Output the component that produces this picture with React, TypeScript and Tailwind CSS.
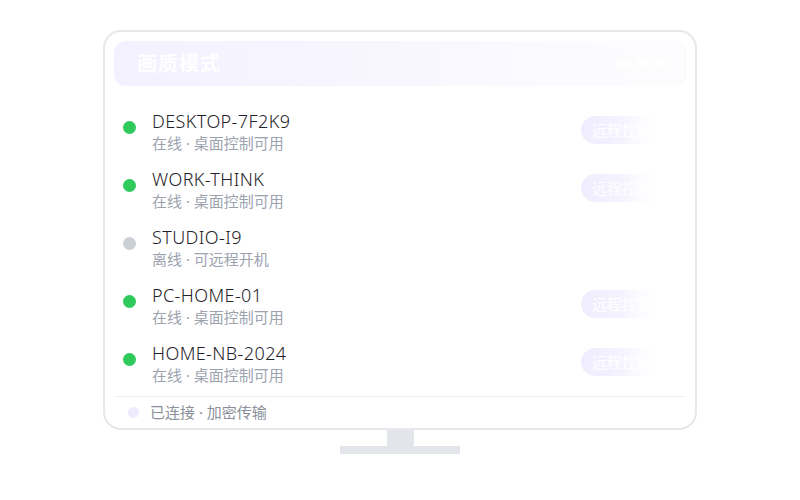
import React from 'react';

interface Device {
  name: string;
  online: boolean;
}

const devices: Device[] = [
  { name: 'DESKTOP-7F2K9', online: true },
  { name: 'WORK-THINK', online: true },
  { name: 'STUDIO-I9', online: false },
  { name: 'PC-HOME-01', online: true },
  { name: 'HOME-NB-2024', online: true },
];

const font = { fontFamily: '"Noto Sans", "Noto Sans CJK SC", sans-serif' };

const DeviceRow: React.FC<{ device: Device }> = ({ device }) => (
  <div className="flex items-center h-[58px] pl-[18px] pr-[32px]">
    <span
      className={`w-[13px] h-[13px] rounded-full mb-[7px] shrink-0 ${device.online ? 'bg-[#2fc95c]' : 'bg-[#cbd0d6]'}`}
    />
    <div className="ml-[16px] flex flex-col">
      <span className="text-[18px] leading-[22px] font-light text-[#1f2329] tracking-[0.4px]">{device.name}</span>
      <span className="text-[15px] leading-[20px] text-[#9ca3af] mt-[1px]">
        {device.online ? '在线 · 桌面控制可用' : '离线 · 可远程开机'}
      </span>
    </div>
    {device.online && (
      <button className="ml-auto mb-[2px] h-[28px] px-[11px] rounded-full text-[15px] text-white bg-gradient-to-r from-[#efecfe] via-[#f5f3ff] to-white [mask-image:linear-gradient(to_right,black_55%,transparent_100%)]">
        远程控制
      </button>
    )}
  </div>
);

export default function App() {
  return (
    <div className="w-[800px] h-[500px] bg-white flex flex-col items-center pt-[30px]" style={font}>
      <div className="w-[594px] h-[400px] border-2 border-[#e6e8eb] rounded-[18px] bg-white flex flex-col overflow-hidden">
        <div className="mx-[9px] mt-[9px] h-[45px] rounded-[12px] bg-gradient-to-r from-[#f3f1ff] via-[#f8f7ff] to-[#fdfdff] flex items-center pl-[23px] pr-[14px] border-r border-[#f5f5f8]">
          <span className="text-[20px] font-bold text-white tracking-[1px]">画质模式</span>
          <div className="ml-auto flex gap-[3px] mr-[1px] opacity-80">
            <span className="w-[16px] h-[9px] rounded-full bg-white" />
            <span className="w-[16px] h-[9px] rounded-sm bg-white" />
            <span className="w-[16px] h-[9px] rounded-sm bg-white" />
          </div>
        </div>

        <div className="mt-[16px] flex flex-col">
          {devices.map((d) => (
            <DeviceRow key={d.name} device={d} />
          ))}
        </div>

        <div className="mx-[10px] mt-[4px] border-t border-[#eef0f2] flex-1 flex items-center pl-[13px]">
          <span className="w-[11px] h-[11px] rounded-full bg-[#eeebfd]" />
          <span className="ml-[11px] text-[15px] text-[#8a9099]">已连接 · 加密传输</span>
        </div>
      </div>
      <div className="w-[27px] h-[16px] bg-[#e2e6ea]" />
      <div className="w-[120px] h-[8px] bg-[#e2e6ea]" />
    </div>
  );
}
